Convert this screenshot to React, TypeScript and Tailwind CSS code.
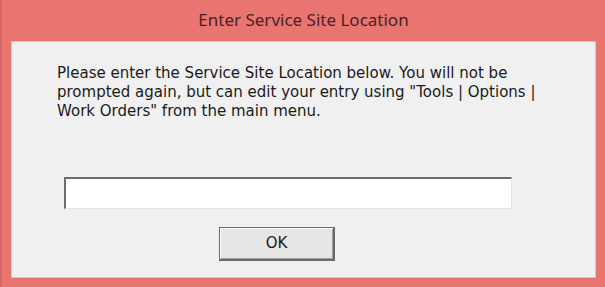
export default function App() {
  return (
    <div className="w-[605px] h-[287px] bg-[#e8756f] border-l-2 border-[#d9655f] flex flex-col" style={{ fontFamily: '"DejaVu Sans", sans-serif' }}>
      <div className="h-[41px] flex items-center justify-center">
        <span className="text-[17px] text-[#4a2323] pb-[2px]" style={{ fontFamily: '"Noto Sans", "Open Sans", sans-serif' }}>
          Enter Service Site Location
        </span>
      </div>
      <div className="ml-[9px] mr-[9px] h-[237px] bg-[#f0f0f0] border border-[#d9c6c4] flex flex-col">
        <div className="pl-[45px] pt-[22px] text-[15px] leading-[19px] text-[#1a1a1a] whitespace-nowrap">
          <div>Please enter the Service Site Location below. You will not be</div>
          <div>prompted again, but can edit your entry using "Tools | Options |</div>
          <div>Work Orders" from the main menu.</div>
        </div>
        <div className="ml-[52px] mt-[56px] w-[448px] h-[32px] bg-white border-t-2 border-l-2 border-[#6d6d6d] border-r border-b border-r-[#e3e3e3] border-b-[#e3e3e3]" />
        <div className="ml-[207px] mt-[18px] w-[116px] h-[34px] border border-[#6a6a6a] border-r-2 border-b-2 bg-[#e6e6e6] flex items-center justify-center shadow-[inset_1px_1px_0_#ffffff,inset_-1px_-1px_0_#a0a0a0]">
          <span className="text-[15px] text-[#1a1a1a]">OK</span>
        </div>
      </div>
    </div>
  );
}
